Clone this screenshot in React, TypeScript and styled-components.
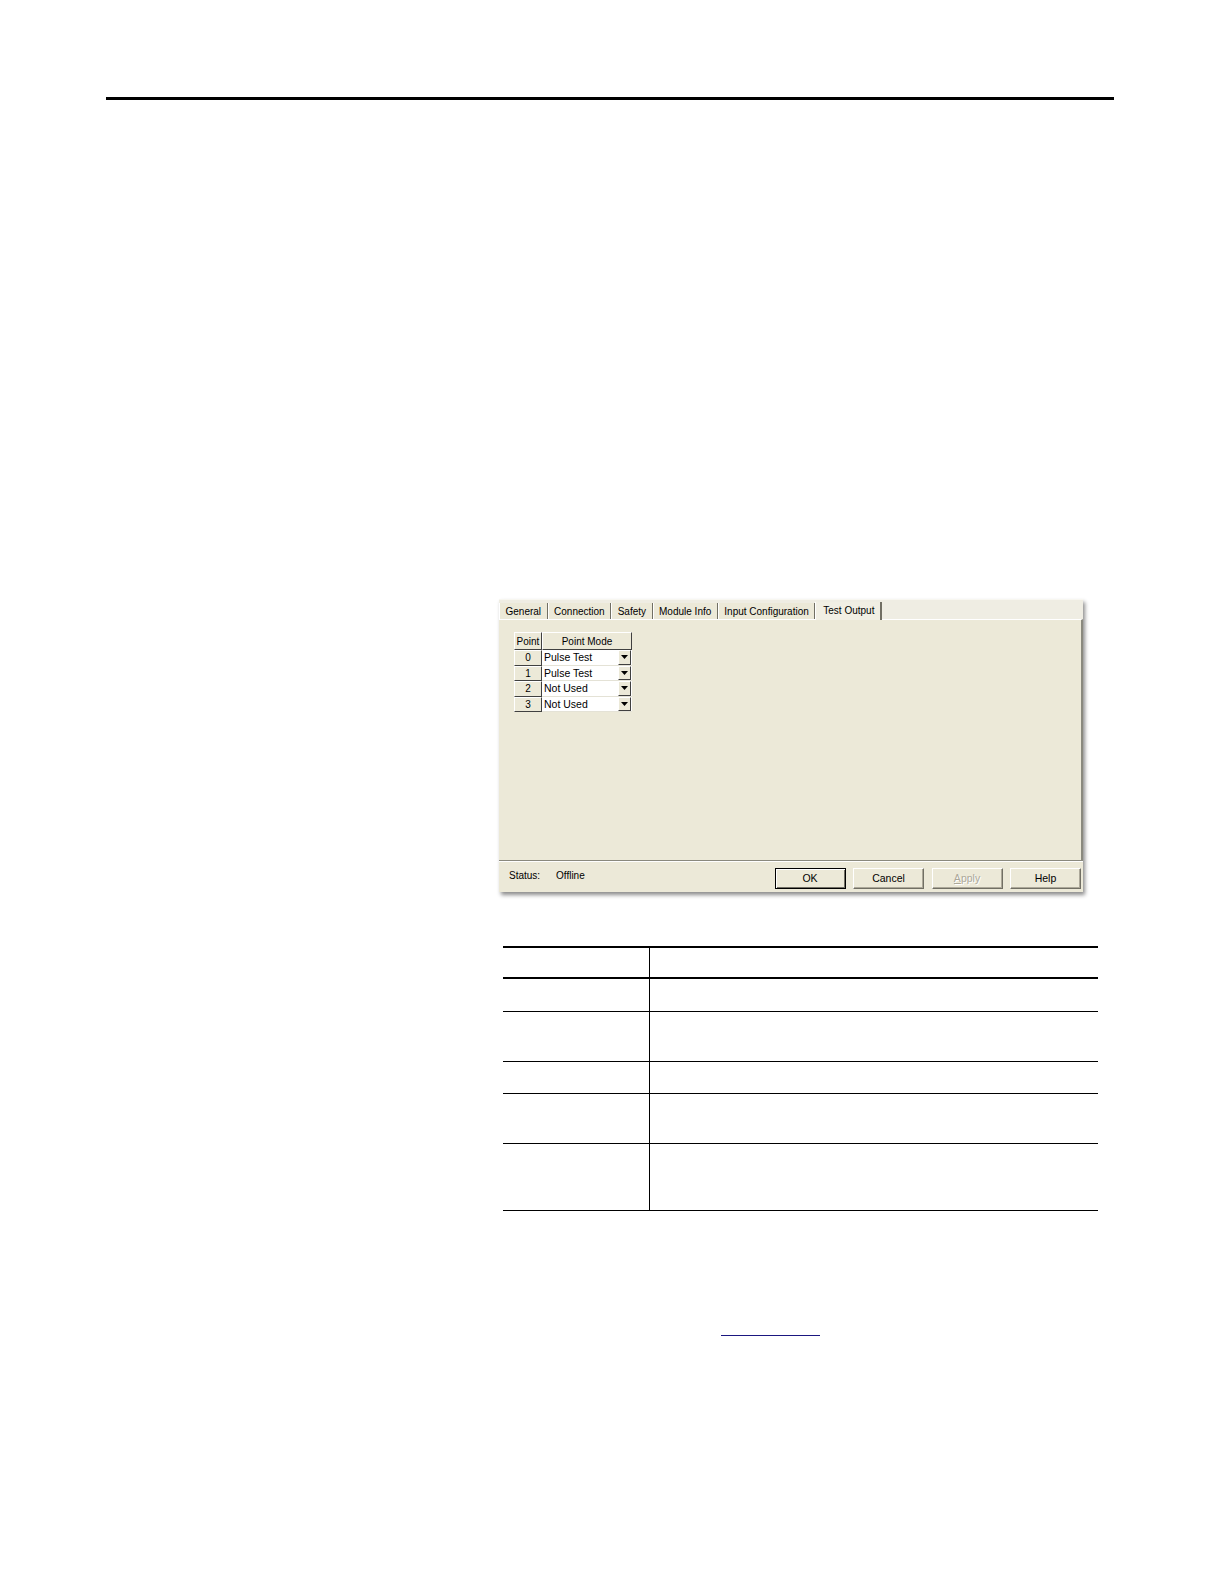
import styled, {createGlobalStyle} from 'styled-components';

const GlobalStyle = createGlobalStyle`
  html, body {
    margin: 0;
    padding: 0;
    background: #ffffff;
  }
  body {
    font-family: "Liberation Sans", Arial, sans-serif;
    color: #000;
  }
`;

const Page = styled.div`
  width: 1224px;
  min-height: 1584px;
  padding-top: 97px;
  box-sizing: border-box;
`;

const TopRule = styled.div`
  height: 3px;
  background: #000;
  margin: 0 110px 0 106px;
`;

const Column = styled.div`
  margin-left: 499px;
  width: 599px;
`;

const Dialog = styled.div`
  margin-top: 499px;
  width: 584px;
  height: 293px;
  background: #ece9d8;
  box-shadow: 2px 3px 4px rgba(0, 0, 0, 0.45);
  display: flex;
  flex-direction: column;
  font-size: 10px;
`;

const TabStrip = styled.div`
  height: 20px;
  box-sizing: border-box;
  display: flex;
  align-items: flex-end;
  background: #efede3;
  border-top: 1px solid #f8f7f1;
`;

const Tab = styled.div<{$active?: boolean}>`
  height: ${p => (p.$active ? 18 : 16)}px;
  box-sizing: border-box;
  display: flex;
  align-items: center;
  padding: ${p => (p.$active ? '0 6px 2px 7px' : '0 5.5px')};
  background: ${p => (p.$active ? '#f1efe4' : '#ece9d8')};
  border-left: 1px solid #ffffff;
  border-right: ${p => (p.$active ? '2px solid #716f64' : '1px solid #716f64')};
  margin-bottom: ${p => (p.$active ? '-1px' : '0')};
  position: relative;
  z-index: ${p => (p.$active ? 1 : 0)};
  white-space: nowrap;
`;

const Panel = styled.div`
  flex: 0 0 242px;
  box-sizing: border-box;
  border-top: 1px solid #ffffff;
  border-right: 2px solid #8a897e;
  border-bottom: 1px solid #8a897e;
  padding: 12px 0 0 15px;
`;

const PointGrid = styled.div`
  display: grid;
  grid-template-columns: 28px 90px;
  grid-template-rows: 18px repeat(4, 15.5px);
  width: 118px;
  font-size: 10px;
`;

const HeadCell = styled.div`
  box-sizing: border-box;
  display: flex;
  align-items: center;
  justify-content: center;
  background: #ece9d8;
  border-top: 1px solid #ffffff;
  border-left: 1px solid #ffffff;
  border-right: 1px solid #404040;
  border-bottom: 1px solid #404040;
`;

const ModeCell = styled.div`
  box-sizing: border-box;
  display: flex;
  align-items: stretch;
  background: #ffffff;
  border-bottom: 1px solid #e4e2d6;
  padding-left: 2px;
  font-size: 10.5px;
`;

const ModeText = styled.span`
  flex: 1;
  display: flex;
  align-items: center;
`;

const DropButton = styled.div`
  width: 13px;
  box-sizing: border-box;
  display: flex;
  align-items: center;
  justify-content: center;
  background: #ece9d8;
  border: 1px solid;
  border-color: #ffffff #404040 #404040 #ffffff;
  margin-right: 1px;
`;

const BottomBar = styled.div`
  flex: 1;
  display: flex;
  align-items: flex-start;
  border-top: 1px solid #ffffff;
  padding: 6px 2px 0 10px;
`;

const StatusLabel = styled.span`
  width: 47px;
  line-height: 16px;
`;

const StatusValue = styled.span`
  line-height: 16px;
  flex: 1;
`;

const Buttons = styled.div`
  display: flex;
  gap: 7.5px;
`;

const Button = styled.div<{$default?: boolean; $disabled?: boolean}>`
  width: 71px;
  height: 21px;
  box-sizing: border-box;
  display: flex;
  align-items: center;
  justify-content: center;
  padding-bottom: 2px;
  background: #ece9d8;
  font-size: 10.5px;
  color: ${p => (p.$disabled ? '#aca899' : '#000')};
  border: 1px solid;
  border-color: ${p => (p.$default ? '#000' : '#ffffff #716f64 #716f64 #ffffff')};
  box-shadow: ${p => (p.$default ? 'inset 1px 1px 0 #ffffff, inset -1px -1px 0 #716f64' : 'inset -1px -1px 0 #aca899')};
  text-shadow: ${p => (p.$disabled ? '1px 1px 0 #ffffff' : 'none')};
  & u {
    text-decoration: underline;
  }
`;

const Table = styled.div`
  margin: 54px 0 0 4px;
  width: 595px;
  border-top: 2px solid #000;
`;

const Row = styled.div<{$height: number; $thick?: boolean}>`
  display: grid;
  grid-template-columns: 147px 1fr;
  box-sizing: border-box;
  height: ${p => p.$height}px;
  border-bottom: ${p => (p.$thick ? 2 : 1)}px solid #000;
`;

const KeyCell = styled.div`
  box-sizing: border-box;
  border-right: 1px solid #000;
`;

const ValueCell = styled.div``;

const LinkLine = styled.div`
  margin-top: 111px;
  padding-left: 222px;
`;

const Link = styled.a`
  display: inline-block;
  width: 99px;
  height: 12px;
  border-bottom: 1.5px solid #1b1780;
`;

const tabs = ['General', 'Connection', 'Safety', 'Module Info', 'Input Configuration', 'Test Output'];

const points = [
  {point: '0', mode: 'Pulse Test'},
  {point: '1', mode: 'Pulse Test'},
  {point: '2', mode: 'Not Used'},
  {point: '3', mode: 'Not Used'},
];

const rowHeights = [33, 50, 32, 50, 67];

function Arrow() {
  return (
    <svg width="7" height="4" viewBox="0 0 7 4">
      <polygon points="0,0 7,0 3.5,4" fill="#000" />
    </svg>
  );
}

export default function App() {
  return (
    <Page>
      <GlobalStyle />
      <TopRule />
      <Column>
        <Dialog>
          <TabStrip>
            {tabs.map(t => (
              <Tab key={t} $active={t === 'Test Output'}>
                {t}
              </Tab>
            ))}
          </TabStrip>
          <Panel>
            <PointGrid>
              <HeadCell>Point</HeadCell>
              <HeadCell>Point Mode</HeadCell>
              {points.map(p => [
                <HeadCell key={'p' + p.point}>{p.point}</HeadCell>,
                <ModeCell key={'m' + p.point}>
                  <ModeText>{p.mode}</ModeText>
                  <DropButton>
                    <Arrow />
                  </DropButton>
                </ModeCell>,
              ])}
            </PointGrid>
          </Panel>
          <BottomBar>
            <StatusLabel>Status:</StatusLabel>
            <StatusValue>Offline</StatusValue>
            <Buttons>
              <Button $default>OK</Button>
              <Button>Cancel</Button>
              <Button $disabled>
                <u>A</u>pply
              </Button>
              <Button>Help</Button>
            </Buttons>
          </BottomBar>
        </Dialog>
        <Table>
          <Row $height={31} $thick>
            <KeyCell />
            <ValueCell />
          </Row>
          {rowHeights.map((h, i) => (
            <Row key={i} $height={h}>
              <KeyCell />
              <ValueCell />
            </Row>
          ))}
        </Table>
        <LinkLine>
          <Link href="#" aria-label="link" />
        </LinkLine>
      </Column>
    </Page>
  );
}
